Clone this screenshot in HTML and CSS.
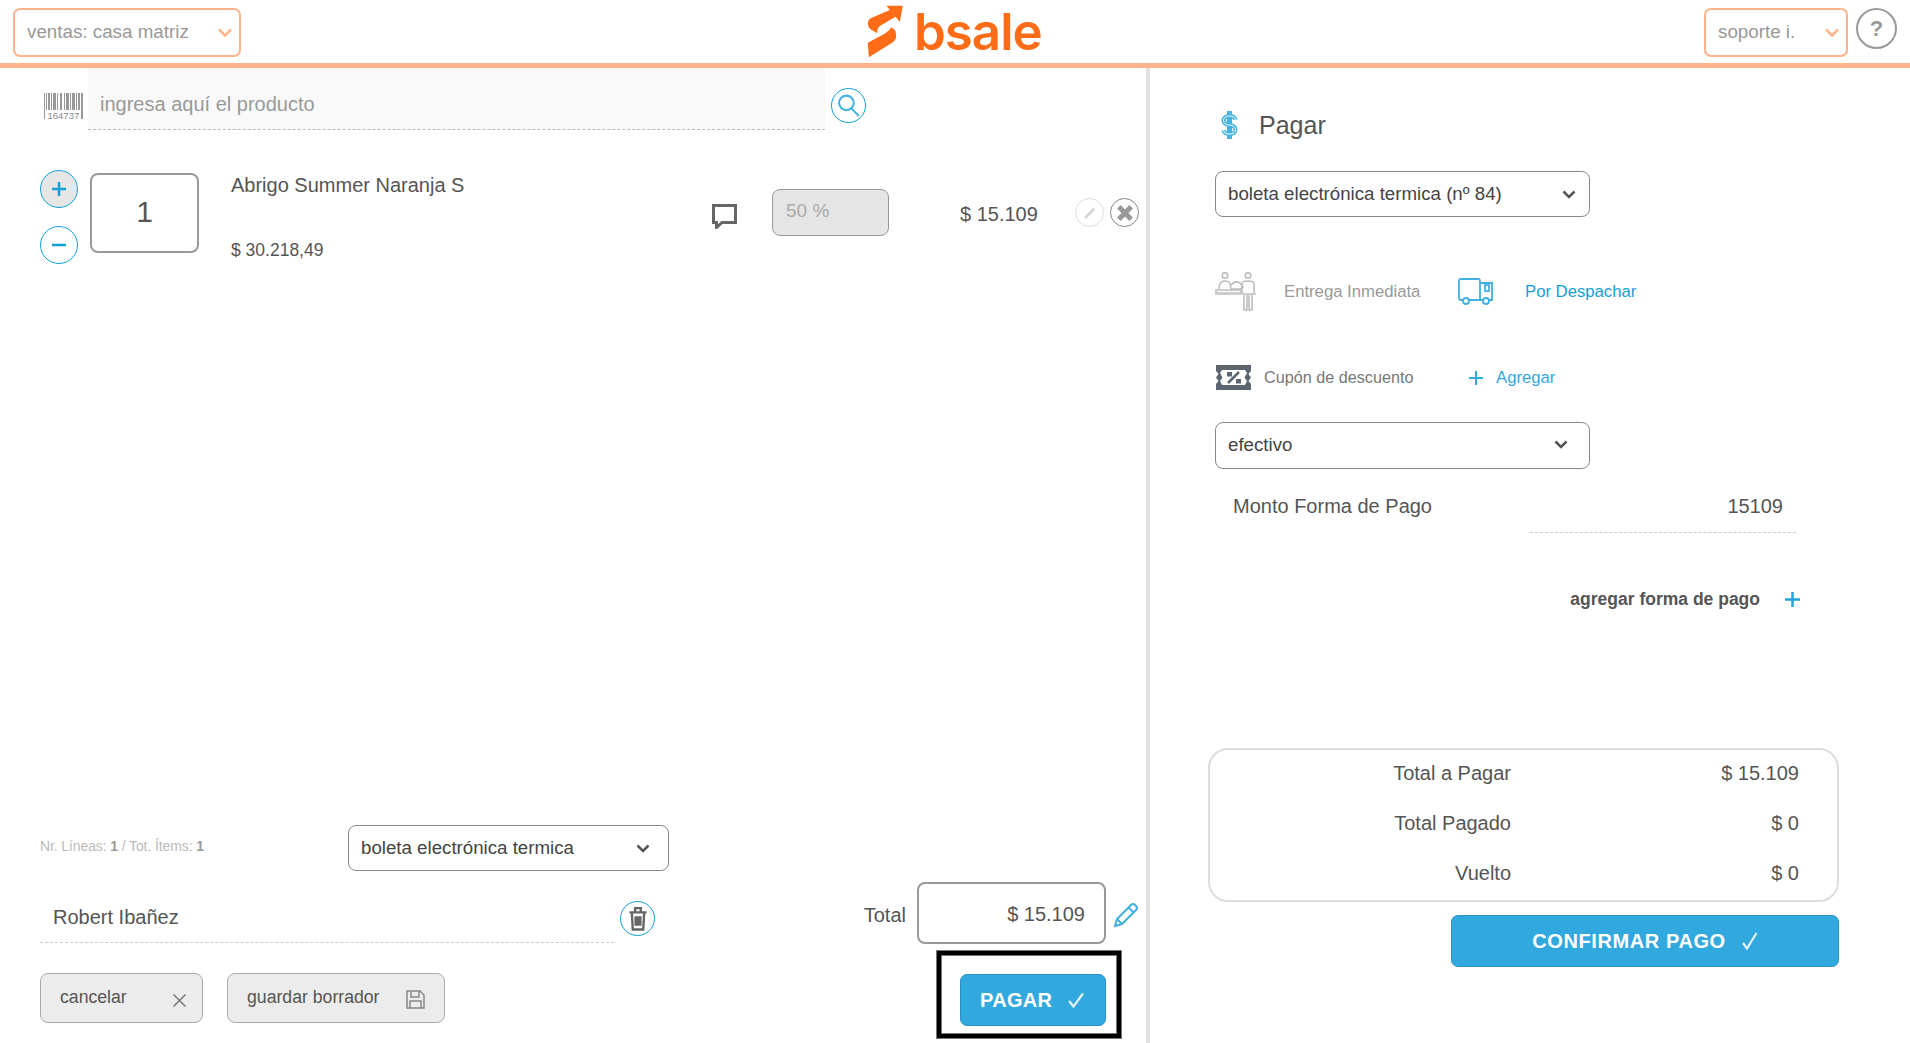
FILE: index.html
```html
<!DOCTYPE html>
<html lang="es">
<head>
  <meta charset="UTF-8">
  <title>bsale - punto de venta</title>
  <link rel="stylesheet" href="styles.css">
</head>
<body>

  <header class="topbar">
    <div class="topbar-left">
      <div class="top-select top-select-wide">
        <span>ventas: casa matriz</span>
        <svg class="chevron-orange" viewBox="0 0 14 9"><path d="M1 1.5l6 6 6-6" /></svg>
      </div>
    </div>
    <div class="logo">
      <svg class="logo-mark" viewBox="50 12 110 162">
        <path d="M52 70Q52 60 62 54L118 30 108 17 157 17 148 66 135 50 88 78Q80 84 80 100L60 88Q52 82 52 70Z" />
        <path d="M122 82L133 90Q137 95 137 108 137 120 125 128L55 172 52 128 105 100Q118 92 122 82Z" />
      </svg>
      <span class="logo-text">bsale</span>
    </div>
    <div class="topbar-right">
      <div class="top-select top-select-small">
        <span>soporte i.</span>
        <svg class="chevron-orange" viewBox="0 0 14 9"><path d="M1 1.5l6 6 6-6" /></svg>
      </div>
      <div class="help">?</div>
    </div>
  </header>

  <main class="main">

    <section class="sale">
      <div class="search-row">
        <svg class="barcode" viewBox="0 0 39 26">
          <g fill="#999">
            <rect x="0" y="0" width="1" height="26" /><rect x="2" y="0" width="1" height="17" />
            <rect x="4" y="0" width="2" height="17" /><rect x="7" y="0" width="1" height="17" />
            <rect x="9" y="0" width="3" height="17" /><rect x="13" y="0" width="1" height="17" />
            <rect x="16" y="0" width="2" height="17" /><rect x="20" y="0" width="1" height="17" />
            <rect x="22" y="0" width="3" height="17" /><rect x="26" y="0" width="1" height="17" />
            <rect x="28" y="0" width="3" height="17" /><rect x="32" y="0" width="1" height="17" />
            <rect x="34" y="0" width="2" height="17" /><rect x="37" y="0" width="2" height="26" />
          </g>
          <text class="barcode-digits" x="3.500" y="25.500">164737</text>
        </svg>
        <div class="search-input">ingresa aquí el producto</div>
        <div class="search-btn">
          <svg viewBox="0 0 24 24" width="25" height="25">
            <circle cx="10" cy="9.500" r="7" />
            <path d="M15 15l7 7" />
          </svg>
        </div>
      </div>

      <div class="item">
        <div class="steppers">
          <div class="step step-on"><svg viewBox="0 0 16 16"><path d="M8 1v14M1 8h14" /></svg></div>
          <div class="step"><svg viewBox="0 0 16 16"><path d="M1 8h14" /></svg></div>
        </div>
        <div class="qty">1</div>
        <div class="item-info">
          <div class="item-name">Abrigo Summer Naranja S</div>
          <div class="item-unit">$ 30.218,49</div>
        </div>
        <svg class="comment" viewBox="0 0 25 25"><path d="M1.500 1.500h22v17H10l-5.500 5v-5h-3z" /></svg>
        <div class="discount">50 %</div>
        <div class="item-price">$ 15.109</div>
        <div class="item-actions">
          <div class="round round-light">
            <svg viewBox="0 0 16 16" width="16" height="16"><path d="M3 13L12.500 3.500" /></svg>
          </div>
          <div class="round round-dark">
            <svg viewBox="0 0 16 16" width="18" height="18"><path d="M2.500 2.500l11 11M13.500 2.500l-11 11" /></svg>
          </div>
        </div>
      </div>

      <div class="sale-footer">
        <div class="footer-row">
          <div class="stats">Nr. Líneas: <b>1</b> / Tot. Ítems: <b>1</b></div>
          <div class="select select-doc">
            <span>boleta electrónica termica</span>
            <svg class="chevron" viewBox="0 0 14 9"><path d="M1.500 1.500L7 7l5.500-5.500" /></svg>
          </div>
        </div>

        <div class="footer-row client-row">
          <div class="client">Robert Ibañez</div>
          <div class="trash">
            <svg viewBox="0 0 20 26" width="20" height="26">
              <path d="M1 6h18M7 5V1.500h6V5M3.500 6l1 18h11l1-18M7.500 10v10M10 10v10M12.500 10v10" />
            </svg>
          </div>
          <div class="total">
            <span class="total-label">Total</span>
            <div class="total-box">$ 15.109</div>
            <svg class="pencil" viewBox="0 0 26 26">
              <path d="M2 24l2-7L18 3q2-2 4 0l1 1q2 2 0 4L9 22z M15.500 5.500l5 5 M4 17l5 5" />
            </svg>
          </div>
        </div>

        <div class="footer-row action-row">
          <div class="btn-soft btn-cancel">
            <span>cancelar</span>
            <svg class="cancel-x" viewBox="0 0 13 13"><path d="M.5.5l12 12M12.500.5l-12 12" /></svg>
          </div>
          <div class="btn-soft btn-draft">
            <span>guardar borrador</span>
            <svg class="save" viewBox="0 0 19 19">
              <path d="M1 1h13l4 4v13H1z M5 1v6h8V1 M4 18v-7h11v7" />
            </svg>
          </div>
          <div class="btn-pay">
            <span>PAGAR</span>
            <svg class="check" viewBox="0 0 16 16"><path d="M1 9l4.500 5.500L15 1.500" /></svg>
            <div class="highlight"></div>
          </div>
        </div>
      </div>
    </section>

    <section class="pay">
      <div class="pay-form">
        <div class="pay-title">
          <svg class="dollar" viewBox="0 0 17 28">
            <path class="dollar-bar" d="M8.500 0v28" />
            <path class="dollar-out" d="M14.500 9C14 6 11.500 5 8.500 5S2.500 6.500 2.500 9.500 5 13.500 8.500 14 14.500 15.500 14.500 18.500 12 23 8.500 23 3 22 2.500 19" />
            <path class="dollar-in" d="M14.500 9C14 6 11.500 5 8.500 5S2.500 6.500 2.500 9.500 5 13.500 8.500 14 14.500 15.500 14.500 18.500 12 23 8.500 23 3 22 2.500 19" />
          </svg>
          <span>Pagar</span>
        </div>

        <div class="select select-full select-voucher">
          <span>boleta electrónica termica (nº 84)</span>
          <svg class="chevron" viewBox="0 0 14 9"><path d="M1.500 1.500L7 7l5.500-5.500" /></svg>
        </div>

        <div class="delivery">
          <svg class="person" viewBox="0 0 41 39">
            <g fill="none" stroke="#bbb" stroke-width="1.500">
              <circle cx="10" cy="3.500" r="2.800" />
              <path d="M4 17q0-8 6-8t6 8" />
              <circle cx="33" cy="3.500" r="2.800" />
              <path d="M27 21v-9q0-3 6-3t6 3v9M29 21v17h3V24h2v14h3V21" />
              <path d="M16 13q4-5 9-2l3 4-3 2h-9" />
              <rect x="1" y="18" width="25" height="3" />
            </g>
            <rect x="0" y="21" width="41" height="2" fill="#ccc" />
          </svg>
          <span class="delivery-off">Entrega Inmediata</span>
          <svg class="truck" viewBox="0 0 35 27">
            <g fill="none" stroke="#3fb0e0" stroke-width="1.800">
              <path d="M5 22H3q-2 0-2-2V3q0-2 2-2h17q2 0 2 2v19H11" />
              <path d="M22 5h12v17h-3M25 22h-3" />
              <rect x="27" y="7" width="4" height="6" />
              <circle cx="8" cy="23" r="3" />
              <circle cx="28" cy="23" r="3" />
            </g>
          </svg>
          <span class="delivery-on">Por Despachar</span>
        </div>

        <div class="coupon">
          <svg class="ticket" viewBox="0 0 35 25">
            <path fill="#5b6670" fill-rule="evenodd" d="M0 0h35v6l-2.500 3 2.500 3.500-2.500 3.500 2.500 3v6H0v-6l2.500-3L0 12.500 2.500 9 0 6zM6 5l-2 3 2.500 4.500L4 16l2 4h23l2-4-2.500-3.500L31 8l-2-3z" />
            <path d="M23 7L12 18" stroke="#5b6670" stroke-width="2.500" />
            <rect x="11" y="7" width="5" height="4.500" fill="#5b6670" />
            <rect x="20" y="14" width="5" height="4.500" fill="#5b6670" />
          </svg>
          <span class="coupon-label">Cupón de descuento</span>
          <svg class="plus-thin" viewBox="0 0 14 14"><path d="M7 0v14M0 7h14" /></svg>
          <span class="coupon-add">Agregar</span>
        </div>

        <div class="select select-full select-method">
          <span>efectivo</span>
          <svg class="chevron chevron-method" viewBox="0 0 14 9"><path d="M1.500 1.500L7 7l5.500-5.500" /></svg>
        </div>

        <div class="amount">
          <span class="amount-label">Monto Forma de Pago</span>
          <div class="amount-value">15109</div>
        </div>

        <div class="add-method">
          <span>agregar forma de pago</span>
          <svg viewBox="0 0 15 15"><path d="M7.500 0v15M0 7.500h15" /></svg>
        </div>
      </div>

      <div class="summary">
        <div class="summary-row"><span>Total a Pagar</span><span>$ 15.109</span></div>
        <div class="summary-row"><span>Total Pagado</span><span>$ 0</span></div>
        <div class="summary-row"><span>Vuelto</span><span>$ 0</span></div>
      </div>

      <div class="btn-confirm">
        <span>CONFIRMAR PAGO</span>
        <svg class="check" viewBox="0 0 16 18"><path d="M1 11l4 5.500L14.500 1" /></svg>
      </div>
    </section>

  </main>

</body>
</html>
```

FILE: styles.css
```css
* { box-sizing: border-box; }
html, body { height: 100%; margin: 0; }
body {
  display: flex;
  flex-direction: column;
  overflow: hidden;
  background: #fff;
  color: #555;
  font-family: "Liberation Sans", Arial, sans-serif;
  font-size: 20px;
}

/* header */
.topbar {
  display: grid;
  grid-template-columns: 1fr auto 1fr;
  flex: none;
  height: 68px;
  border-bottom: 5px solid #ffb38a;
}
.topbar-left { padding: 8px 0 0 13px; }
.topbar-right { display: flex; justify-content: flex-end; gap: 8px; padding: 8px 13px 0 0; }
.top-select {
  display: flex;
  align-items: center;
  justify-content: space-between;
  height: 49px;
  border: 2px solid #ffb38a;
  border-radius: 7px;
  color: #999;
  font-size: 18.800px;
}
.top-select span { margin-bottom: 2px; }
.top-select-wide { width: 228px; padding: 0 7px 0 12px; }
.top-select-small { width: 144px; padding: 0 7px 0 12px; }
.chevron-orange { width: 14px; height: 9px; fill: none; stroke: #ffb38a; stroke-width: 2.500; }
.help {
  width: 41px;
  height: 41px;
  border: 2px solid #999;
  border-radius: 50%;
  color: #999;
  font-size: 22px;
  font-weight: bold;
  line-height: 37px;
  text-align: center;
}
.logo { display: flex; width: 176px; gap: 10px; padding-top: 4px; }
.logo-mark { flex: none; width: 37px; height: 54px; fill: #ff6c17; }
.logo-text {
  color: #ff6c17;
  font-family: Inter, sans-serif;
  font-size: 51px;
  font-weight: 600;
  line-height: 56px;
  letter-spacing: -1px;
}

.main { display: flex; flex: 1; min-height: 0; }

/* left side */
.sale {
  display: flex;
  flex-direction: column;
  width: 1150px;
  padding: 0 7px 17px 40px;
  border-right: 4px solid #e2e2e2;
}
.search-row { display: flex; margin-left: 4px; }
.barcode { flex: none; width: 39px; height: 26px; margin: 25px 5px 0 0; }
.barcode-digits { fill: #888; font-family: "Liberation Sans", sans-serif; font-size: 9.500px; }
.search-input {
  width: 737px;
  height: 62px;
  padding: 24px 0 0 12px;
  background: #f9f9f9;
  border-bottom: 1px dashed #bbb;
  color: #999;
  line-height: 24px;
}
.search-btn {
  display: flex;
  align-items: center;
  justify-content: center;
  width: 35px;
  height: 35px;
  margin: 20px 0 0 6px;
  border: 1px solid #12a0d8;
  border-radius: 50%;
}
.search-btn svg { fill: none; stroke: #45b4e2; stroke-width: 2; }

.item { display: flex; align-items: flex-start; margin-top: 40px; }
.steppers { display: flex; flex-direction: column; gap: 18px; }
.step {
  display: flex;
  align-items: center;
  justify-content: center;
  width: 38px;
  height: 38px;
  border: 1px solid #12a0d8;
  border-radius: 50%;
}
.step-on { background: #e6e6e6; }
.step svg { width: 16px; height: 16px; fill: none; stroke: #12a0d8; stroke-width: 2.500; }
.qty {
  width: 109px;
  height: 80px;
  margin: 3px 0 0 12px;
  border: 2px solid #999;
  border-radius: 8px;
  font-size: 30px;
  line-height: 74px;
  text-align: center;
}
.item-info { width: 481px; margin: 3px 0 0 32px; }
.item-name { line-height: 24px; }
.item-unit { margin-top: 43px; font-size: 17.500px; line-height: 20px; }
.comment { flex: none; width: 25px; height: 25px; margin-top: 34px; fill: none; stroke: #666; stroke-width: 3; }
.discount {
  width: 117px;
  height: 47px;
  margin: 19px 0 0 35px;
  padding-left: 13px;
  background: #e5e5e5;
  border: 1px solid #999;
  border-radius: 8px;
  color: #aaa;
  font-size: 19px;
  line-height: 42px;
}
.item-price { width: 78px; margin: 32px 0 0 71px; line-height: 24px; }
.item-actions { display: flex; gap: 6px; margin: 28px 0 0 37px; }
.round {
  display: flex;
  align-items: center;
  justify-content: center;
  width: 29px;
  height: 29px;
  border-radius: 50%;
}
.round-light { border: 1px solid #ddd; }
.round-light svg { fill: none; stroke: #d8d8d8; stroke-width: 3; }
.round-dark { border: 1px solid #888; }
.round-dark svg { fill: none; stroke: #999; stroke-width: 4.500; }

.sale-footer { margin-top: auto; }
.footer-row { display: flex; }
.stats { width: 308px; padding-top: 13px; color: #bbb; font-size: 14px; line-height: 16px; letter-spacing: -.11px; }
.stats b { color: #999; }
.select {
  display: flex;
  align-items: center;
  justify-content: space-between;
  height: 46px;
  padding: 0 13px 0 12px;
  border: 1px solid #888;
  border-radius: 8px;
  color: #444;
  font-size: 18.700px;
}
.select-doc { width: 321px; padding-right: 18px; }
.chevron { width: 14px; height: 9px; fill: none; stroke: #555; stroke-width: 2.500; }

.client-row { height: 62px; margin-top: 11px; }
.client {
  width: 574px;
  height: 61px;
  padding: 23px 0 0 13px;
  border-bottom: 1px dashed #ccc;
  line-height: 24px;
}
.trash {
  display: flex;
  align-items: center;
  justify-content: center;
  width: 35px;
  height: 35px;
  margin: 19px 0 0 6px;
  border: 1px solid #12a0d8;
  border-radius: 50%;
}
.trash svg { fill: none; stroke: #666; stroke-width: 2.500; transform: scale(.95); }
.total { display: flex; margin-left: auto; }
.total-label { margin: 21px 11px 0 0; line-height: 24px; }
.total-box {
  width: 189px;
  height: 62px;
  padding: 18px 19px 0 0;
  border: 2px solid #999;
  border-radius: 8px;
  line-height: 24px;
  text-align: right;
}
.pencil { width: 26px; height: 26px; margin: 20px 0 0 7px; fill: none; stroke: #3fb0e0; stroke-width: 2; }

.action-row { margin-top: 29px; }
.btn-soft {
  display: flex;
  justify-content: space-between;
  height: 50px;
  padding: 12px 16px 0 19px;
  background: #ececec;
  border: 1px solid #aaa;
  border-radius: 8px;
  font-size: 17.670px;
  line-height: 22px;
}
.btn-cancel { width: 163px; }
.btn-draft { width: 218px; margin-left: 24px; padding-right: 19px; }
.cancel-x { width: 13px; height: 13px; margin-top: 8px; fill: none; stroke: #777; stroke-width: 1.500; }
.save { width: 19px; height: 19px; margin-top: 4px; fill: none; stroke: #888; stroke-width: 1.500; }

.btn-pay, .btn-confirm {
  display: flex;
  align-items: center;
  background: #32a9de;
  border: 1px solid #2a90c6;
  border-radius: 7px;
  color: #fff;
  font-weight: bold;
}
.btn-pay {
  position: relative;
  width: 146px;
  height: 52px;
  margin: 1px 33px 0 auto;
  padding-left: 19px;
  gap: 16px;
  letter-spacing: .3px;
}
.check { width: 16px; height: 16px; fill: none; stroke: #e3f4fb; stroke-width: 2.200; }
.highlight {
  position: absolute;
  left: -24px;
  top: -24px;
  width: 184px;
  height: 87px;
  border: 4px solid #000;
  box-shadow: 0 0 0 1px #777, inset 0 0 0 1px #777;
}

/* right side */
.pay { flex: 1; padding: 43px 71px 0 58px; }
.pay-form { margin-left: 7px; }
.pay-title { display: flex; align-items: center; height: 28px; padding-left: 6px; font-size: 25px; }
.pay-title span { margin-left: 21px; }
.dollar { width: 17px; height: 28px; }
.dollar-bar { fill: none; stroke: #45b4e2; stroke-width: 5; }
.dollar-out { fill: none; stroke: #45b4e2; stroke-width: 4; }
.dollar-in { fill: none; stroke: #fff; stroke-width: 1; }
.select-full { width: 375px; }
.select-voucher { margin-top: 32px; }
.select-method { height: 47px; margin-top: 32px; padding: 0 21px 2px 12px; }

.delivery { display: flex; align-items: center; height: 39px; margin-top: 55px; font-size: 16.700px; }
.person { width: 41px; height: 39px; }
.delivery-off { width: 136px; margin-left: 28px; color: #999; white-space: nowrap; }
.truck { width: 35px; height: 27px; margin-left: 38px; }
.delivery-on { margin-left: 32px; color: #129fd6; }

.coupon { display: flex; align-items: center; height: 25px; margin-top: 54px; }
.ticket { width: 35px; height: 25px; margin-left: 1px; }
.coupon-label { width: 149px; margin-left: 13px; color: #777; font-size: 16.200px; white-space: nowrap; }
.plus-thin { width: 14px; height: 14px; margin-left: 56px; fill: none; stroke: #33a9de; stroke-width: 2; }
.coupon-add { margin-left: 13px; color: #33a9de; font-size: 16.700px; }

.amount { display: flex; justify-content: space-between; width: 581px; height: 46px; margin-top: 18px; }
.amount-label { padding: 7px 0 0 18px; line-height: 24px; }
.amount-value {
  width: 266px;
  height: 46px;
  padding: 7px 13px 0 0;
  border-bottom: 1px dashed #ccc;
  line-height: 24px;
  text-align: right;
}
.add-method {
  display: flex;
  align-items: center;
  justify-content: flex-end;
  gap: 25px;
  width: 585px;
  height: 24px;
  margin-top: 54px;
  color: #555;
  font-size: 17.500px;
  font-weight: bold;
}
.add-method svg { width: 15px; height: 15px; fill: none; stroke: #1ea6dc; stroke-width: 2.500; }

.summary {
  display: flex;
  flex-direction: column;
  gap: 4px;
  height: 154px;
  margin-top: 137px;
  border: 2px solid #ddd;
  border-radius: 20px;
}
.summary-row { display: flex; justify-content: space-between; height: 46px; padding-right: 38px; line-height: 46px; }
.summary-row span:first-child { width: 301px; text-align: right; }
.btn-confirm {
  justify-content: center;
  gap: 16px;
  width: 388px;
  height: 52px;
  margin: 13px 0 0 auto;
  letter-spacing: .6px;
}
.btn-confirm .check { height: 18px; }
```
